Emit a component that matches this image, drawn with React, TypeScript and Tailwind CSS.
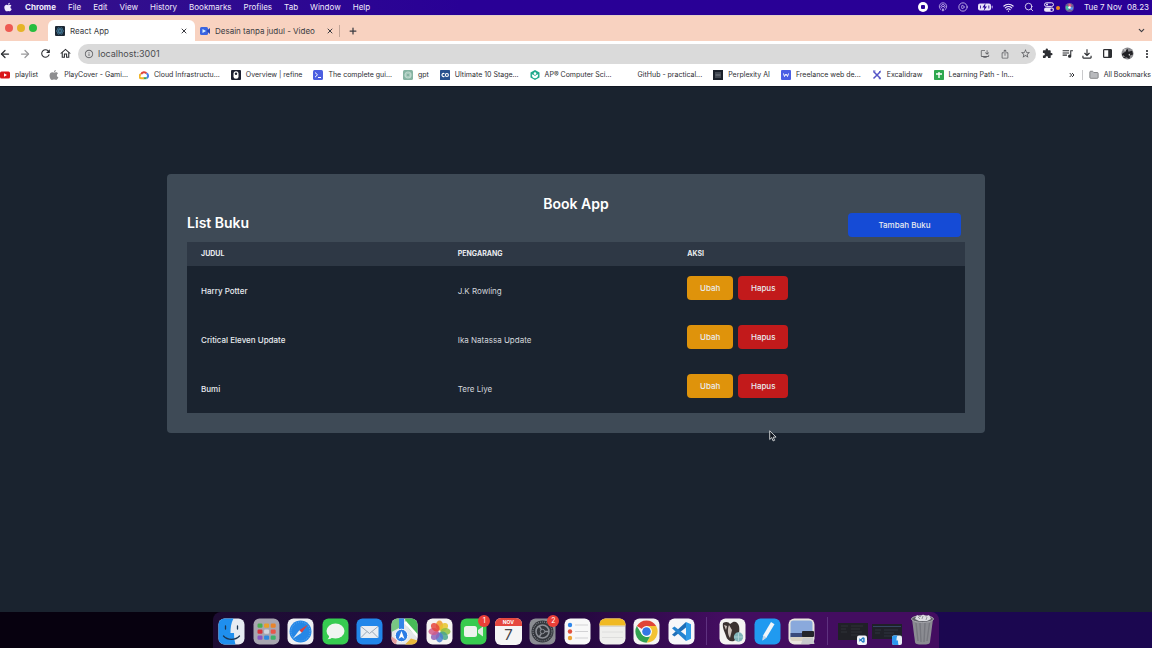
import type { ReactNode } from "react";
import {
  ArrowLeft,
  ArrowRight,
  ChevronDown,
  ChevronsRight,
  CirclePlay,
  Folder,
  Plus,
  Podcast,
  Search,
  Wifi,
  X,
} from "lucide-react";
import { FaApple } from "react-icons/fa";
import {
  MdExtension,
  MdInfoOutline,
  MdInstallDesktop,
  MdIosShare,
  MdMoreVert,
  MdOutlineFileDownload,
  MdOutlineHome,
  MdQueueMusic,
  MdRefresh,
  MdStarBorder,
} from "react-icons/md";
import { VscVscode } from "react-icons/vsc";

/* ---------- menu bar ---------- */

const menus = ["File", "Edit", "View", "History", "Bookmarks", "Profiles", "Tab", "Window", "Help"];

function MenuBar() {
  return (
    <header className="flex h-[15px] items-center justify-between bg-linear-to-r from-[#34118a] to-[#290096] to-40% pr-[3px] pb-px pl-[3px] text-[8px] leading-none text-[#f1ecfc]">
      <nav className="flex items-center gap-3" aria-label="Menu bar">
        <FaApple className="size-[10px]" />
        <button className="font-bold">Chrome</button>
        {menus.map((m) => (
          <button key={m}>{m}</button>
        ))}
      </nav>
      <div className="flex items-center gap-[10px]">
        <svg viewBox="0 0 10 10" className="size-[10px]">
          <circle cx="5" cy="5" r="5" fill="#fff" />
          <rect x="3" y="3" width="4" height="4" rx="1" fill="#290096" />
        </svg>
        <Podcast className="size-[10px] text-[#c5b5ec]" />
        <CirclePlay className="size-[10px] text-[#cdbff0]" />
        <svg viewBox="0 0 15 8" className="h-2 w-[15px]">
          <rect x="0" y="0.5" width="13" height="7" rx="2" fill="#e9e2fa" />
          <rect x="13.6" y="2.6" width="1.2" height="2.8" rx="0.6" fill="#a996df" />
          <path d="M7.6 0 4.4 4.4h2L5.6 8l3.4-4.6h-2z" fill="#290096" />
          <path d="M2.5 2.5v3M10.8 2.5v3" stroke="#290096" strokeWidth="0.8" />
        </svg>
        <Wifi className="size-[11px]" strokeWidth={2.5} />
        <Search className="size-[10px]" />
        <span className="relative">
          <svg viewBox="0 0 11 10" className="h-[10px] w-[11px]">
            <rect x="0.5" y="0.8" width="9" height="3.6" rx="1.8" fill="none" stroke="#ece6fa" />
            <circle cx="3" cy="2.6" r="1" fill="#ece6fa" />
            <rect x="0" y="5.6" width="10" height="4.2" rx="2.1" fill="#ece6fa" />
            <circle cx="7.6" cy="7.7" r="1.2" fill="#290096" />
          </svg>
          <i className="absolute top-[4px] left-3 size-1 rounded-full bg-[#f08b1d]" />
        </span>
        <svg viewBox="0 0 10 10" className="size-[9px]">
          <circle cx="5" cy="5" r="5" fill="#6d5f94" />
          <path d="M5 5C2 1 5 0 6.5 1.5S7 4 5 5" fill="#ea5b86" />
          <path d="M5 5c4-2 5 1 3 2.500S5.500 6 5 5" fill="#5a8df0" />
          <path d="M5 5c-1 5-4 3-4 0s3-1 4 0" fill="#3fc3a6" />
          <circle cx="5" cy="5" r="1.400" fill="#fff" />
        </svg>
        <span className="flex gap-[5px] whitespace-nowrap">
          <span>Tue 7 Nov</span>
          <span>08.23</span>
        </span>
      </div>
    </header>
  );
}

/* ---------- tabs and toolbar ---------- */

function ReactMark() {
  return (
    <svg viewBox="0 0 20 20" className="size-[10px] shrink-0">
      <rect width="20" height="20" rx="2" fill="#1c2733" />
      <g fill="none" stroke="#4a86a8" strokeWidth="1.300">
        <ellipse cx="10" cy="10" rx="7.500" ry="3" />
        <ellipse cx="10" cy="10" rx="7.500" ry="3" transform="rotate(60 10 10)" />
        <ellipse cx="10" cy="10" rx="7.500" ry="3" transform="rotate(120 10 10)" />
      </g>
      <circle cx="10" cy="10" r="1.500" fill="#4a86a8" />
    </svg>
  );
}

function TabStrip() {
  return (
    <div className="flex h-[26px] items-center justify-between border-t border-[#e3d0c8] bg-[#f8d2c0] pr-[6px] text-[8px] text-[#3b3c42]">
      <div className="flex h-full items-end">
        <div className="flex h-full w-12 items-center gap-1 pb-[2px] pl-[5px]">
          <button aria-label="Close window" className="size-2 rounded-full bg-[#ee5a52]" />
          <button aria-label="Minimise window" className="size-2 rounded-full bg-[#e5b427]" />
          <button aria-label="Zoom window" className="size-2 rounded-full bg-[#27bd3e]" />
        </div>
        <div className="flex h-[21px] w-[147px] items-center gap-[5px] rounded-t-md bg-white px-[7px]">
          <ReactMark />
          <button className="flex-1 text-left">React App</button>
          <button aria-label="Close React App">
            <X className="size-2" strokeWidth={3} />
          </button>
        </div>
        <div className="flex h-[21px] w-[144px] items-center gap-[5px] pr-[5px] pl-[5px]">
          <svg viewBox="0 0 20 20" className="size-[10px] shrink-0">
            <rect x="0" y="2" width="16" height="16" rx="3" fill="#3a63e0" />
            <path d="m14 9 6-5v12l-6-5z" fill="#2a47b8" />
            <path d="M5 6v8l7-4z" fill="#d9f3ff" />
          </svg>
          <button className="flex-1 text-left whitespace-nowrap">Desain tanpa judul - Video</button>
          <button aria-label="Close Desain tanpa judul">
            <X className="size-2" strokeWidth={3} />
          </button>
        </div>
        <div className="flex h-[21px] items-center gap-2">
          <span className="h-3 w-px bg-[#c4a698]" />
          <button aria-label="New tab">
            <Plus className="size-[10px]" strokeWidth={3} />
          </button>
        </div>
      </div>
      <button aria-label="Search tabs">
        <ChevronDown className="mt-1 size-[9px]" strokeWidth={3} />
      </button>
    </div>
  );
}

function ToolButton({ label, children }: { label: string; children: ReactNode }) {
  return (
    <button aria-label={label} className="flex size-[10px] shrink-0 items-center justify-center">
      {children}
    </button>
  );
}

function Toolbar() {
  return (
    <div className="flex h-[25px] items-center bg-white text-[#2d2f33]">
      <div className="flex items-center gap-[10px] pr-2">
        <ToolButton label="Back">
          <ArrowLeft className="size-3 shrink-0" strokeWidth={2.5} />
        </ToolButton>
        <ToolButton label="Forward">
          <ArrowRight className="size-3 shrink-0 text-[#9a9a9c]" strokeWidth={2.5} />
        </ToolButton>
        <ToolButton label="Reload">
          <MdRefresh className="size-[13px] shrink-0" />
        </ToolButton>
        <ToolButton label="Home">
          <MdOutlineHome className="size-[13px] shrink-0" />
        </ToolButton>
      </div>
      <div className="flex h-5 flex-1 items-center gap-[10px] rounded-full bg-[#dadada] pr-[6px] pl-[6px] text-[#626367]">
        <div className="flex flex-1 items-center gap-1">
          <MdInfoOutline className="size-[10px]" />
          <input
            aria-label="Address"
            defaultValue="localhost:3001"
            className="min-w-0 flex-1 bg-transparent text-[9px] leading-none text-[#4c4d50] outline-none"
          />
        </div>
        <ToolButton label="Install app">
          <MdInstallDesktop className="size-[10px]" />
        </ToolButton>
        <ToolButton label="Share">
          <MdIosShare className="size-[10px]" />
        </ToolButton>
        <ToolButton label="Bookmark this page">
          <MdStarBorder className="size-[11px] shrink-0" />
        </ToolButton>
      </div>
      <div className="flex items-center gap-[10px] pl-[6px]">
        <ToolButton label="Extensions">
          <MdExtension className="size-[11px] shrink-0" />
        </ToolButton>
        <ToolButton label="Media controls">
          <MdQueueMusic className="size-[13px] shrink-0" />
        </ToolButton>
        <ToolButton label="Downloads">
          <MdOutlineFileDownload className="size-[14px] shrink-0" />
        </ToolButton>
        <ToolButton label="Side panel">
          <svg viewBox="0 0 10 10" className="size-[9px]">
            <rect x="0.700" y="0.700" width="8.600" height="8.600" rx="0.800" fill="none" stroke="currentColor" strokeWidth="1.400" />
            <path d="M5.800 1h3.500v8H5.800z" fill="currentColor" />
          </svg>
        </ToolButton>
        <ToolButton label="Profile">
          <svg viewBox="0 0 14 14" className="size-[13px] shrink-0">
            <circle cx="7" cy="7" r="6.500" fill="#8a8a8e" />
            <path d="M1 8c2-3 3-1 4-4l2-2 1 3 4-1 1 4-3 1-1 4-3-2-3 1z" fill="#202024" />
            <path d="m3 3 2-1v3zM8 8l2-1-1 3zM2 9l2 1-1 1z" fill="#d5d5d5" />
          </svg>
        </ToolButton>
        <ToolButton label="More">
          <MdMoreVert className="size-3 shrink-0" />
        </ToolButton>
      </div>
    </div>
  );
}

/* ---------- bookmarks ---------- */

const bookmarks: { title: string; icon: ReactNode }[] = [
  {
    title: "playlist",
    icon: (
      <>
        <rect x="0" y="1.500" width="10" height="7" rx="1.500" fill="#d9161a" />
        <path d="M4 3.300v3.400L7 5z" fill="#fff" />
      </>
    ),
  },
  {
    title: "PlayCover - Gami...",
    icon: (
      <path
        d="M6.800 0c.1 1-.8 2-1.800 2C4.900 1 5.800.1 6.800 0M5.100 2.600c.5 0 1-.5 2-.4.8 0 1.500.5 1.900 1.100-1.700 1.100-1.400 3.300.4 4C8.900 8.600 8 10 7 10c-.7 0-.9-.4-1.900-.4S3.800 10 3.100 10C1.500 10-.1 6.500.8 4.200 1.200 3 2.300 2.300 3.200 2.300c.8 0 1.400.3 1.900.3"
        fill="#8e8e90"
      />
    ),
  },
  {
    title: "Cloud Infrastructu...",
    icon: (
      <g fill="none" strokeWidth="2">
        <path d="M2.200 4.200A3 3 0 0 1 7.600 3.600" stroke="#e0453a" />
        <path d="M7.400 3.400A2.600 2.600 0 0 1 7.600 8.200" stroke="#4a80ea" />
        <path d="M7.600 8.200H4.400" stroke="#3fa559" />
        <path d="M4.800 8.200H2.800A1.800 1.800 0 0 1 2 4.500" stroke="#f0b528" />
      </g>
    ),
  },
  {
    title: "Overview | refine",
    icon: (
      <>
        <rect width="10" height="10" rx="1" fill="#1c2030" />
        <rect x="2.500" y="1.200" width="5" height="7.600" rx="2.500" fill="#fff" />
        <circle cx="5" cy="3.800" r="1.200" fill="#1c2030" />
      </>
    ),
  },
  {
    title: "The complete gui...",
    icon: (
      <>
        <rect width="10" height="10" rx="1.500" fill="#4c5fe0" />
        <path d="m2 2.500 2.500 2.300L2 7.200M5 7.500h3" stroke="#fff" fill="none" />
      </>
    ),
  },
  {
    title: "gpt",
    icon: (
      <>
        <rect width="10" height="10" rx="1.500" fill="#86b3a2" />
        <circle cx="5" cy="5" r="3" fill="none" stroke="#bed8ce" strokeWidth="1.200" />
        <path d="m3 4 2-1 2 1v2L5 7 3 6z" fill="none" stroke="#d3e5de" strokeWidth="0.600" />
      </>
    ),
  },
  {
    title: "Ultimate 10 Stage...",
    icon: (
      <>
        <rect width="10" height="10" rx="0.500" fill="#28518f" />
        <path d="M4.400 3.800a1.500 1.500 0 1 0 0 2.400" fill="none" stroke="#fff" strokeWidth="1.100" />
        <circle cx="6.900" cy="5" r="1.500" fill="none" stroke="#fff" strokeWidth="1.100" />
      </>
    ),
  },
  {
    title: "AP® Computer Sci...",
    icon: (
      <>
        <path d="m5 0 4.500 2.500v5L5 10 .5 7.500v-5z" fill="#20a98c" />
        <circle cx="5" cy="3.600" r="1.300" fill="#fff" />
        <path d="M1.800 4.500C3 4.500 4.500 5.200 5 6.200c.5-1 2-1.700 3.200-1.700C8 7 7 8.300 5 8.300S2 7 1.800 4.500" fill="#fff" />
      </>
    ),
  },
  { title: "GitHub - practical...", icon: null },
  {
    title: "Perplexity AI",
    icon: (
      <>
        <rect width="10" height="10" fill="#1a2029" />
        <path d="M3 2v6M5 2v6M7 2v6M2.500 5h5" stroke="#8c949c" strokeWidth="0.700" />
      </>
    ),
  },
  {
    title: "Freelance web de...",
    icon: (
      <>
        <rect width="10" height="10" rx="1" fill="#4b5ee4" />
        <path d="m2.500 3.500 1 3L5 4l1.500 2.500 1-3" stroke="#fff" fill="none" />
      </>
    ),
  },
  {
    title: "Excalidraw",
    icon: (
      <>
        <path d="m1.500 1.500 7 7M8.500 1.500l-7 7" stroke="#5353c6" strokeWidth="1.500" />
        <path d="M1 1h2.500M6.800 8.700H9M8.800 1 7 2" stroke="#5353c6" />
      </>
    ),
  },
  {
    title: "Learning Path - In...",
    icon: (
      <>
        <rect width="10" height="10" rx="0.800" fill="#2fa84f" />
        <path d="M5 2v6M2 4h6" stroke="#fff" strokeWidth="1.400" />
      </>
    ),
  },
];

function BookmarksBar() {
  return (
    <nav
      aria-label="Bookmarks"
      className="flex h-5 items-center justify-between bg-white pr-px pb-[2px] text-[7px] text-[#2c2d31]"
    >
      <div className="flex items-center gap-[11px]">
        {bookmarks.map((b) => (
          <a key={b.title} href="#" className="flex items-center gap-[5px] whitespace-nowrap">
            <svg viewBox="0 0 10 10" className="size-[10px]">
              {b.icon}
            </svg>
            {b.title}
          </a>
        ))}
      </div>
      <div className="flex items-center gap-[6px]">
        <button aria-label="More bookmarks">
          <ChevronsRight className="size-2" strokeWidth={3} />
        </button>
        <span className="h-[10px] w-px bg-[#c9c9cb]" />
        <a href="#" className="flex items-center gap-[5px] whitespace-nowrap">
          <Folder className="size-[10px] fill-[#b9babd] text-[#77787b]" />
          All Bookmarks
        </a>
      </div>
    </nav>
  );
}

/* ---------- page ---------- */

const books = [
  { title: "Harry Potter", author: "J.K Rowling" },
  { title: "Critical Eleven Update", author: "Ika Natassa Update" },
  { title: "Bumi", author: "Tere Liye" },
];

function BookApp() {
  return (
    <main className="flex-1 border-t border-[#111722] bg-[#1a232f] pt-[87px] pb-10 text-[#e9ecef]">
      <section className="mx-auto w-[71%] rounded bg-[#3e4a56] p-5">
        <h1 className="text-center text-[14px] leading-[19px] font-semibold text-white">Book App</h1>
        <div className="flex items-start justify-between pr-1 pb-[5px]">
          <h2 className="text-[14px] leading-5 font-semibold text-white">List Buku</h2>
          <button className="h-6 w-[113px] rounded bg-[#154bd6] text-[8px] font-medium">Tambah Buku</button>
        </div>
        <table className="w-full table-fixed bg-[#1a232f] text-left text-[8px]">
          <thead className="bg-[#2e3845] text-[7px] uppercase">
            <tr className="h-6">
              <th className="w-[33%] px-[14px] font-bold">Judul</th>
              <th className="w-[29.5%] px-[14px] font-bold">Pengarang</th>
              <th className="px-[14px] font-bold">Aksi</th>
            </tr>
          </thead>
          <tbody>
            {books.map((b) => (
              <tr key={b.title} className="h-[49px]">
                <th scope="row" className="px-[14px] font-medium">
                  {b.title}
                </th>
                <td className="px-[14px] text-[#d3d7dc]">{b.author}</td>
                <td className="px-[14px] align-top">
                  <div className="flex gap-[5px] pt-[10px]">
                    <button className="h-6 w-[46px] rounded bg-[#df930b] font-medium">Ubah</button>
                    <button className="h-6 w-[50px] rounded bg-[#c21a1b] font-medium">Hapus</button>
                  </div>
                </td>
              </tr>
            ))}
          </tbody>
        </table>
      </section>
    </main>
  );
}

/* ---------- dock ---------- */

function Tile({ name, badge, children }: { name: string; badge?: string; children: ReactNode }) {
  return (
    <button aria-label={name} className="relative size-[27px]">
      <svg viewBox="0 0 27 27" className="size-[27px]">
        {children}
      </svg>
      {badge && (
        <span className="absolute -top-[3px] -right-[3px] flex size-3 items-center justify-center rounded-full bg-[#ea3f38] text-[7px] leading-none text-white">
          {badge}
        </span>
      )}
    </button>
  );
}

function Base({ fill }: { fill: string }) {
  return <rect x="0.500" y="0.500" width="26" height="26" rx="6" fill={fill} />;
}

const launchpad = ["#49b050", "#e8a02a", "#e8842a", "#d8343a", "#d3d5dc", "#e8554a", "#8a56c2", "#2f8be0", "#3fb06a"];
const petals = ["#f09a2a", "#e6c32c", "#8fbf3f", "#4aa58a", "#4a7fd0", "#8d62b8", "#d05a8a", "#e5483c"];

function Dock() {
  return (
    <footer className="flex h-9 justify-center bg-linear-to-r from-[#07010f] from-20% to-[#1b0750] to-80%">
      <div className="flex w-[726px] items-center rounded-t-lg bg-linear-to-r from-[#1d0c33] via-[#25083f] to-[#430d60] to-70% pt-[2px] pl-[5px]">
        <div className="flex w-[477px] justify-between">
          <Tile name="Finder">
            <Base fill="#e6ebf2" />
            <path d="M6.500.5h9C13 5 12.500 10 12.500 15H16c0 4 .5 8 1.500 11.500h-11a6 6 0 0 1-6-6v-14a6 6 0 0 1 6-6" fill="#1f8fee" />
            <path d="M7.500 8v3M19.500 8v3M5.500 18c4 4.500 12 4.500 16 0" stroke="#1b3552" strokeWidth="1.300" fill="none" strokeLinecap="round" />
          </Tile>
          <Tile name="Launchpad">
            <Base fill="#a8a6b0" />
            {launchpad.map((c, i) => (
              <rect key={c} x={4.5 + (i % 3) * 6.6} y={5.5 + Math.floor(i / 3) * 6} width="5" height="4.200" rx="1.200" fill={c} />
            ))}
          </Tile>
          <Tile name="Safari">
            <Base fill="#eef0f3" />
            <circle cx="13.500" cy="13.500" r="11" fill="#2587e6" />
            <circle cx="13.500" cy="13.500" r="9.500" fill="none" stroke="#8cc3f3" strokeDasharray="0.600 1.400" strokeWidth="0.800" />
            <path d="m21 6.500-6.300 8.200-2.400-2.400z" fill="#e2403a" />
            <path d="m6 20.500 6.300-8.200 2.400 2.400z" fill="#e8edf2" />
          </Tile>
          <Tile name="Messages">
            <Base fill="#37cc50" />
            <ellipse cx="13.500" cy="13" rx="9" ry="7.500" fill="#f0f5f0" />
            <path d="M7 17c.5 2-.5 3.500-1.500 4.300 2.500 0 4-1 5-2z" fill="#f0f5f0" />
          </Tile>
          <Tile name="Mail">
            <Base fill="#2186ea" />
            <rect x="4.500" y="8" width="18" height="12" rx="1.500" fill="#e9edf2" />
            <path d="m5 8.500 8.500 7 8.500-7M5 19.500l6-6M22 19.500l-6-6" fill="none" stroke="#9aa8b8" />
          </Tile>
          <Tile name="Maps">
            <Base fill="#e4e8ea" />
            <path d="M14 .5h6.500a6 6 0 0 1 6 6V17C20 14 15 9 14 .5" fill="#48bd58" />
            <path d="M.5 6.500a6 6 0 0 1 6-6H8V10L.5 14z" fill="#78c683" />
            <path d="M8 .5h5V14H8z" fill="#3485e8" />
            <path d="m14 26.500 6-6 6.500 2c-1 2.500-3 4-6 4z" fill="#e9b83c" />
            <path d="m15 3 11.500 13v4L13 5z" fill="#fff" />
            <path d="M.5 18.500 6 22l-1 4.300C2 25.500.5 23 .5 20.500z" fill="#e7a0a0" />
            <circle cx="10.500" cy="17.500" r="6.300" fill="#2b7de5" stroke="#fff" strokeWidth="1" />
            <path d="m10.500 13 3 8-3-2-3 2z" fill="#fff" />
          </Tile>
          <Tile name="Photos">
            <Base fill="#f5f4f2" />
            {petals.map((c, i) => (
              <ellipse key={c} cx="13.500" cy="7.500" rx="3.600" ry="5" fill={c} opacity="0.850" transform={`rotate(${i * 45} 13.5 13.5)`} />
            ))}
          </Tile>
          <Tile name="FaceTime" badge="1">
            <Base fill="#38cb4f" />
            <rect x="4" y="8" width="13" height="11" rx="2.500" fill="#eef3ee" />
            <path d="m18 12 5-3.500v10L18 15z" fill="#dfe9df" />
          </Tile>
          <button aria-label="Calendar" className="flex size-[27px] flex-col overflow-hidden rounded-md bg-[#f5f5f5] text-center text-[#47474b]">
            <span className="h-2 w-full bg-[#e5483f] text-[5px] leading-[8px] font-bold text-white">NOV</span>
            <span className="w-full text-[15px] leading-[18px]">7</span>
          </button>
          <Tile name="System Settings" badge="2">
            <Base fill="#8b8d93" />
            <circle cx="13.500" cy="13.500" r="11" fill="#33363c" />
            <circle cx="13.500" cy="13.500" r="9.500" fill="none" stroke="#7d8087" strokeDasharray="1 1" strokeWidth="1.200" />
            <circle cx="13.500" cy="13.500" r="6.500" fill="none" stroke="#8b8e95" strokeWidth="1.600" />
            <path d="M13.500 13.500H20M13.500 13.500l-3.300-5.600M13.500 13.500l-3.300 5.600" stroke="#8b8e95" strokeWidth="1.500" />
            <circle cx="13.500" cy="13.500" r="2.200" fill="#33363c" stroke="#8b8e95" />
          </Tile>
          <Tile name="Reminders">
            <Base fill="#f8f8f8" />
            <circle cx="6" cy="7" r="2.200" fill="#2e86ea" />
            <circle cx="6" cy="13.500" r="2.200" fill="#e2503c" />
            <circle cx="6" cy="20" r="2.200" fill="#eba336" />
            <path d="M11 7h13M11 13.500h13M11 20h13" stroke="#d2d2d4" />
          </Tile>
          <Tile name="Notes">
            <Base fill="#efefed" />
            <path d="M.5 7.500v-1a6 6 0 0 1 6-6h14a6 6 0 0 1 6 6v1z" fill="#f0b923" />
            <path d="M.5 8.300h26" stroke="#a9a08a" strokeDasharray="1 1" strokeWidth="0.800" />
            <path d="M3 14h21M3 19.500h21" stroke="#dededd" />
          </Tile>
          <Tile name="Chrome">
            <Base fill="#f5f5f3" />
            <path d="M13.500 13.500 3.800 8a11.200 11.200 0 0 1 19.400 0z" fill="#e04537" />
            <path d="M13.500 8h9.700a11.200 11.200 0 0 1-9.700 16.700l4.700-8.400z" fill="#f3c332" />
            <path d="M3.800 8 9 16.500l4.500 2.500 3.500-.5-3.500 6.200A11.200 11.200 0 0 1 3.800 8" fill="#32a150" />
            <circle cx="13.500" cy="13.500" r="5.400" fill="#fff" />
            <circle cx="13.500" cy="13.500" r="4.300" fill="#3577e5" />
          </Tile>
          <Tile name="Visual Studio Code">
            <Base fill="#f6f7f9" />
            <path d="M18 4 23 6.300v14.400L18 23z" fill="#2e9be8" />
            <path d="M18 4v5.500L6.500 18.600 4 16.700z" fill="#1f6fb8" />
            <path d="M18 23v-5.500L6.500 8.400 4 10.300z" fill="#2483cf" />
          </Tile>
        </div>
        <span className="ml-[11px] h-7 w-px bg-[#5f3280]" />
        <div className="ml-3 flex w-[96px] justify-between">
          <Tile name="DBeaver">
            <Base fill="#f5f4f2" />
            <path d="M4 5c3-2 6-1 7 1l3-2c3-1 5 1 6 4 1 5 0 11-5 15-4 1-7-1-8-5S3 10 4 5" fill="#3b3230" />
            <path d="m10 7 3 5-2 8c-2-3-3-8-1-13M5 7l3 1-1 4z" fill="#cfc4bd" />
            <circle cx="19.500" cy="19" r="4.700" fill="#7fb3b8" />
            <path d="M15 19h9M19.500 14.500v9" stroke="#b5d5d8" strokeWidth="0.800" />
          </Tile>
          <Tile name="Editor">
            <Base fill="#209af0" />
            <path d="m17 4 3.500 2.200-8 13.300-4 3 .7-5.200z" fill="#f1f6fa" />
            <path d="m9.200 17.300 3.300 2.200-4 3z" fill="#c4d7e6" />
          </Tile>
          <Tile name="Preview">
            <Base fill="#e9e6df" />
            <rect x="2.500" y="2.500" width="22" height="20" rx="3" fill="#8aa9dc" />
            <path d="M2.500 15h22v4h-22z" fill="#3a4a7c" />
            <path d="M2.500 19h22v2a2 2 0 0 1-2 2h-18a2 2 0 0 1-2-2z" fill="#d9d2c4" />
            <rect x="14" y="13" width="12" height="6" rx="1" fill="#22242b" />
            <path d="M15 20h10l1.500 6H13z" fill="#c8cacd" />
          </Tile>
        </div>
        <span className="ml-3 h-7 w-px bg-[#5f3280]" />
        <div className="ml-[10px] flex items-center gap-[3px]">
          <button aria-label="Minimised editor window" className="h-[27px] w-[31px]">
            <svg viewBox="0 0 31 27" className="h-[27px] w-[31px]">
              <rect x="0" y="5" width="30" height="17" fill="#202127" />
              <path d="M3 8h7M3 11h5M3 14h6M13 8h12M13 11h9M13 14h11M13 17h7" stroke="#34373e" strokeWidth="0.800" />
              <rect x="19" y="17.500" width="10" height="9.500" rx="2" fill="#f2f5f9" />
              <VscVscode x="20.500" y="18.700" size={7} color="#2079c4" />
            </svg>
          </button>
          <button aria-label="Minimised finder window" className="h-[27px] w-[31px]">
            <svg viewBox="0 0 31 27" className="h-[27px] w-[31px]">
              <rect x="0" y="6" width="30" height="15" fill="#1f2129" />
              <path d="M1 8.500h28" stroke="#3b5074" strokeWidth="0.800" />
              <path d="M3 12h6M3 15h5M12 12h14M12 15h10M12 18h12" stroke="#343a48" strokeWidth="0.800" />
              <rect x="20" y="17.500" width="10" height="9.500" rx="2" fill="#e8eef5" />
              <path d="M22 17.500h3.500c-1 2-1 3-1 5H26c0 1.500 0 3 .5 4.500H22a2 2 0 0 1-2-2v-5.500a2 2 0 0 1 2-2" fill="#2c97f0" />
            </svg>
          </button>
          <button aria-label="Trash" className="-mt-[3px] ml-1 h-[31px] w-[25px]">
            <svg viewBox="0 0 25 31" className="h-[31px] w-[25px]">
              <path d="M2 5h21l-3 23c-.3 2-2 2.500-7.500 2.500S5.300 30 5 28z" fill="#8b8c92" />
              <path d="m6 9 2 18M10 9l1 19M15 9l-1 19M19.500 9 17 27" stroke="#77787f" strokeWidth="1.400" />
              <ellipse cx="12.500" cy="5" rx="11" ry="3.400" fill="#5e5f66" stroke="#a9aab0" />
              <path d="m5 5 2-4 3 2 3-2.500 3 2L19 1l2 4-4 2H9z" fill="#dddee2" />
              <path d="m8 3 2 2M13 2l-1 3M17 3l-1 3" stroke="#85868c" strokeWidth="0.800" />
            </svg>
          </button>
        </div>
      </div>
    </footer>
  );
}

export default function App() {
  return (
    <div className="relative flex min-h-screen flex-col font-['Inter','Liberation_Sans',sans-serif]">
      <MenuBar />
      <TabStrip />
      <Toolbar />
      <BookmarksBar />
      <BookApp />
      <Dock />
      <svg viewBox="0 0 8 12" className="pointer-events-none absolute top-[430px] left-[769px] h-3 w-2">
        <path d="M.7.8v8.700l2-1.900 1.400 3.300 1.500-.6-1.400-3.200h2.900z" fill="#10151d" stroke="#d8dadd" strokeWidth="0.900" />
      </svg>
    </div>
  );
}
